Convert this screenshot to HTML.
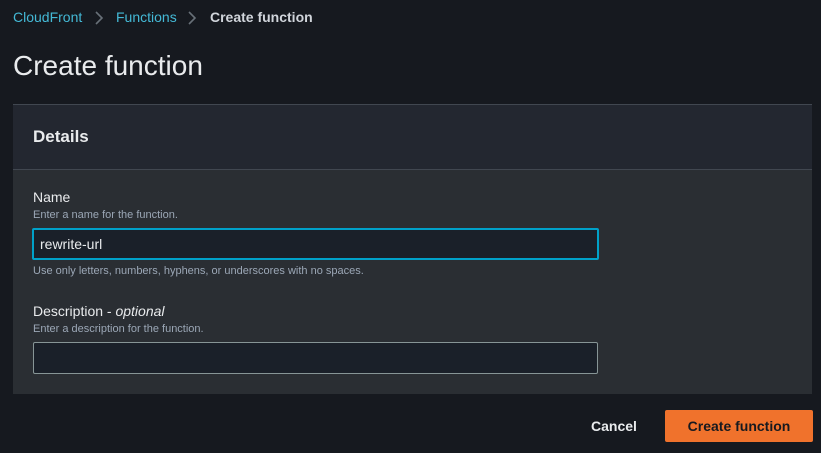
<!DOCTYPE html>
<html><head><style>
*{box-sizing:border-box;margin:0;padding:0}
body{width:821px;height:453px;background:#16191f;font-family:"Liberation Sans",sans-serif;position:relative;overflow:hidden;color:#d1d5db}
.a{position:absolute}
</style></head><body>
<div class="a" style="left:13px;top:9px;font-size:14px;color:#44b9d6;white-space:nowrap">CloudFront</div>
<svg class="a" style="left:94px;top:10px" width="10" height="16" viewBox="0 0 10 16"><path d="M2 2l6 6-6 6" fill="none" stroke="#687078" stroke-width="1.6"/></svg>
<div class="a" style="left:116px;top:9px;font-size:14px;color:#44b9d6;white-space:nowrap">Functions</div>
<svg class="a" style="left:187px;top:10px" width="10" height="16" viewBox="0 0 10 16"><path d="M2 2l6 6-6 6" fill="none" stroke="#687078" stroke-width="1.6"/></svg>
<div class="a" style="left:210px;top:9px;font-size:14px;font-weight:bold;color:#d1d5db;white-space:nowrap">Create function</div>
<div class="a" style="left:13px;top:50px;font-size:28px;color:#e9ebed">Create function</div>
<div class="a" style="left:13px;top:104px;width:799px;height:290px;background:#2a2e33;border-top:1px solid #414750">
<div style="height:65px;background:#232730;border-bottom:1px solid #414750;padding:22px 20px;font-size:17px;font-weight:bold;color:#e9ebed">Details</div>
</div>
<div class="a" style="left:33px;top:189px;font-size:14px;color:#e9ebed">Name</div>
<div class="a" style="left:33px;top:209px;font-size:11px;color:#9ba7b6">Enter a name for the function.</div>
<div class="a" style="left:32px;top:228px;width:567px;height:32px;background:#1a2029;border:2px solid #00a1c9;border-radius:2px;padding:6px 6px;font-size:14px;color:#e9ebed">rewrite-url</div>
<div class="a" style="left:33px;top:265px;font-size:11px;color:#9ba7b6">Use only letters, numbers, hyphens, or underscores with no spaces.</div>
<div class="a" style="left:33px;top:303px;font-size:14px;color:#e9ebed">Description - <i>optional</i></div>
<div class="a" style="left:33px;top:323px;font-size:11px;color:#9ba7b6">Enter a description for the function.</div>
<div class="a" style="left:33px;top:342px;width:565px;height:32px;background:#1a2029;border:1px solid #879596;border-radius:2px"></div>
<div class="a" style="left:591px;top:418px;font-size:14px;font-weight:bold;color:#e9ebed">Cancel</div>
<div class="a" style="left:665px;top:410px;width:148px;height:32px;background:#f0722c;border-radius:2px;font-size:14px;font-weight:bold;color:#16191f;text-align:center;line-height:32px">Create function</div>
</body></html>
